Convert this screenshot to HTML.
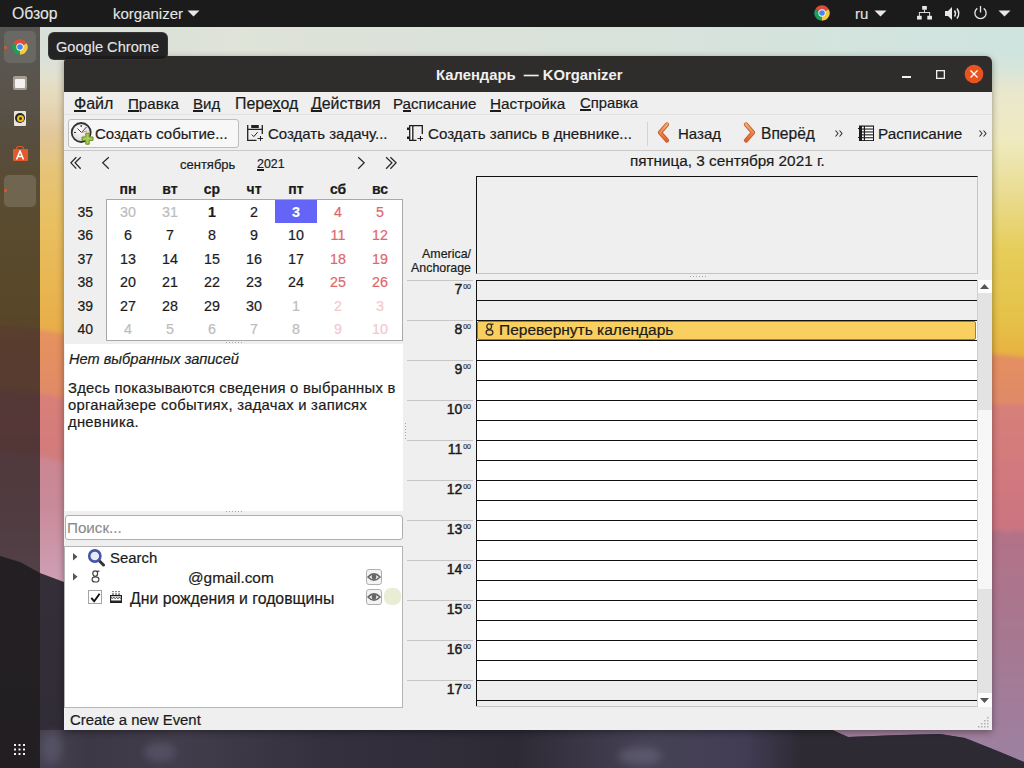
<!DOCTYPE html>
<html><head><meta charset="utf-8">
<style>
*{margin:0;padding:0;box-sizing:border-box}
html,body{width:1024px;height:768px;overflow:hidden}
body{position:relative;font-family:"Liberation Sans",sans-serif;font-size:15px;color:#1b1b1b;background:#c9a0a0;-webkit-text-stroke:0.2px currentColor}
.a{position:absolute;white-space:nowrap;line-height:1}
#wall{position:absolute;left:0;top:0}
#topbar{left:0;top:0;width:1024px;height:27px;background:#1b1b1b;color:#e6e6e6;font-size:15px;-webkit-text-stroke:0.1px #e6e6e6}
#dock{left:0;top:27px;width:40px;height:741px;background:rgba(28,26,26,.7)}
#win{left:64px;top:56px;width:928px;height:674px;background:#efefef;overflow:hidden;border-radius:6px 6px 0 0;box-shadow:0 2px 7px rgba(0,0,0,.38)}
#title{left:0;top:0;width:928px;height:36px;background:#2f2d2c;color:#f0f0f0;font-weight:bold}
.u{position:relative}
.u:after{content:"";position:absolute;left:0;right:0;bottom:0px;height:2px;background:#1b1b1b}
.ul{border-bottom:1px solid #1b1b1b}
.wk{width:30px;text-align:right;font-size:14px;color:#1b1b1b}
.dh{font-weight:bold;font-size:14px;width:42px;text-align:center}
.d{width:42px;text-align:center;font-size:14.3px}
.g{color:#bcbcbc}
.r{color:#e0666a}
.p{color:#f3c9cb}
.hl{left:343px;width:66px;height:1px;background:#c8c8c8}
.hr{font-size:14px;text-align:right;width:60px;left:335px;color:#1b1b1b;-webkit-text-stroke:0.45px #1b1b1b}
.hr sup{font-size:7px;vertical-align:0;position:relative;top:-5px;margin-left:1px;-webkit-text-stroke:0.15px #1b1b1b}
.line{left:412px;width:501px;height:1px;background:#111}
</style></head><body>
<svg id="wall" width="1024" height="768" viewBox="0 0 1024 768">
  <defs>
    <linearGradient id="skyL" x1="0" y1="27" x2="0" y2="340" gradientUnits="userSpaceOnUse">
      <stop offset="0" stop-color="#e4e7dc"/>
      <stop offset="0.10" stop-color="#e7e6d4"/>
      <stop offset="0.24" stop-color="#e6d8b8"/>
      <stop offset="0.34" stop-color="#e2c89c"/>
      <stop offset="0.46" stop-color="#e6c478"/>
      <stop offset="0.62" stop-color="#e8c062"/>
      <stop offset="0.82" stop-color="#e8b652"/>
      <stop offset="1" stop-color="#e8ac48"/>
    </linearGradient>
    <linearGradient id="skyR" x1="0" y1="27" x2="0" y2="360" gradientUnits="userSpaceOnUse">
      <stop offset="0" stop-color="#d4e6df"/>
      <stop offset="0.10" stop-color="#dfe6d6"/>
      <stop offset="0.22" stop-color="#ebe7cb"/>
      <stop offset="0.34" stop-color="#efeabf"/>
      <stop offset="0.52" stop-color="#e9da8c"/>
      <stop offset="0.67" stop-color="#e6cd5a"/>
      <stop offset="0.88" stop-color="#e5c148"/>
      <stop offset="1" stop-color="#e8b042"/>
    </linearGradient>
    <linearGradient id="topS" x1="40" y1="0" x2="1024" y2="0" gradientUnits="userSpaceOnUse">
      <stop offset="0" stop-color="#d8dfd9"/>
      <stop offset="0.2" stop-color="#dfe3d8"/>
      <stop offset="0.5" stop-color="#dae2da"/>
      <stop offset="1" stop-color="#cfe4df"/>
    </linearGradient>
    <linearGradient id="r1" x1="0" y1="330" x2="0" y2="404" gradientUnits="userSpaceOnUse">
      <stop offset="0" stop-color="#e6925e"/>
      <stop offset="1" stop-color="#e08a68"/>
    </linearGradient>
    <linearGradient id="r2" x1="0" y1="395" x2="0" y2="532" gradientUnits="userSpaceOnUse">
      <stop offset="0" stop-color="#d88078"/>
      <stop offset="1" stop-color="#cb7482"/>
    </linearGradient>
    <linearGradient id="r3" x1="0" y1="460" x2="0" y2="768" gradientUnits="userSpaceOnUse">
      <stop offset="0" stop-color="#c27a8c"/>
      <stop offset="0.25" stop-color="#b27288"/>
      <stop offset="0.6" stop-color="#a67892"/>
      <stop offset="1" stop-color="#9c82a2"/>
    </linearGradient>
    <linearGradient id="r3L" x1="0" y1="455" x2="0" y2="580" gradientUnits="userSpaceOnUse">
      <stop offset="0" stop-color="#cc8690"/>
      <stop offset="0.4" stop-color="#c88a9a"/>
      <stop offset="1" stop-color="#cf9fb4"/>
    </linearGradient>
    <linearGradient id="mtn" x1="0" y1="550" x2="0" y2="768" gradientUnits="userSpaceOnUse">
      <stop offset="0" stop-color="#352f3a"/>
      <stop offset="1" stop-color="#2f2b36"/>
    </linearGradient>
    <linearGradient id="mtnH" x1="40" y1="0" x2="992" y2="0" gradientUnits="userSpaceOnUse">
      <stop offset="0" stop-color="#4a4656"/>
      <stop offset="0.05" stop-color="#3e3a48"/>
      <stop offset="0.15" stop-color="#45404f"/>
      <stop offset="0.30" stop-color="#353140"/>
      <stop offset="0.50" stop-color="#2d2934"/>
      <stop offset="0.56" stop-color="#3a3646"/>
      <stop offset="0.64" stop-color="#4a465a"/>
      <stop offset="0.74" stop-color="#45405a"/>
      <stop offset="0.80" stop-color="#2e2a33"/>
      <stop offset="1" stop-color="#2e2a33"/>
    </linearGradient>
    <clipPath id="mclip"><path d="M0 556 L20 562 L40 573 L64 582 L200 640 L400 700 L600 718 L760 724 L830 729 L848 737 L900 735 L940 734 L965 738 L1000 752 L1024 762 L1024 768 L0 768Z"/></clipPath>
    <linearGradient id="topMG" x1="0" y1="27" x2="0" y2="87" gradientUnits="userSpaceOnUse"><stop offset="0" stop-color="#fff"/><stop offset="0.45" stop-color="#fff"/><stop offset="1" stop-color="#000"/></linearGradient>
    <mask id="topM" maskUnits="userSpaceOnUse" x="0" y="0" width="1024" height="768"><rect x="0" y="27" width="1024" height="60" fill="url(#topMG)"/></mask>
    <filter id="soft" x="-10%" y="-10%" width="120%" height="120%"><feGaussianBlur stdDeviation="2"/></filter>
    <filter id="bl2" x="-50%" y="-50%" width="200%" height="200%"><feGaussianBlur stdDeviation="4"/></filter>
  </defs>
  <rect x="0" y="0" width="512" height="768" fill="url(#skyL)"/>
  <rect x="512" y="0" width="512" height="768" fill="url(#skyR)"/>
  <rect x="40" y="27" width="984" height="60" fill="url(#topS)" mask="url(#topM)"/>
  <g filter="url(#soft)"><path d="M-30 324 L30 328 L64 334 L300 340 L700 348 L992 354 L1054 360 L1054 800 L-30 800Z" fill="url(#r1)"/>
  <path d="M-30 388 L40 393 L64 398 L400 400 L800 402 L992 404 L1054 406 L1054 800 L-30 800Z" fill="url(#r2)"/>
  <path d="M-30 447 L40 456 L64 462 L400 490 L512 498 L512 800 L-30 800Z" fill="url(#r3L)"/>
  <path d="M511 498 L800 520 L992 532 L1000 529 L1006 533 L1012 530 L1054 536 L1054 800 L511 800Z" fill="url(#r3)"/></g>
  <path d="M0 556 L20 562 L40 573 L64 582 L200 640 L400 700 L600 718 L760 724 L830 729 L848 737 L900 735 L940 734 L965 738 L1000 752 L1024 762 L1024 768 L0 768Z" fill="url(#mtn)"/>
  <rect x="40" y="730" width="984" height="38" fill="url(#mtnH)" opacity=".85" clip-path="url(#mclip)"/>
  <g filter="url(#bl2)" opacity=".45">
  <ellipse cx="52" cy="748" rx="10" ry="16" fill="#6a6880"/>
  <ellipse cx="160" cy="752" rx="16" ry="10" fill="#6a6680"/>
  <ellipse cx="640" cy="756" rx="22" ry="9" fill="#76728a"/>
  </g>
</svg>

<div id="topbar" class="a">
  <div class="a" style="left:12px;top:6px;font-size:15.8px">Обзор</div>
  <div class="a" style="left:113px;top:6px">korganizer</div>
  <svg class="a" style="left:187px;top:10px" width="13" height="7"><path d="M0.5 0.5 L12.5 0.5 L6.5 6.5Z" fill="#e8e8e8"/></svg>
  <svg class="a" style="left:814px;top:5px" width="16" height="16" viewBox="0 0 16 16">
    <path d="M8 8 L1.33 4.15 A7.7 7.7 0 0 1 14.67 4.15 Z" fill="#dd4b3a"/>
    <path d="M8 8 L14.67 4.15 A7.7 7.7 0 0 1 8 15.7 Z" fill="#f5c93e"/>
    <path d="M8 8 L8 15.7 A7.7 7.7 0 0 1 1.33 4.15 Z" fill="#1ba05a"/>
    <circle cx="8" cy="8" r="3.7" fill="#f4f4f4"/><circle cx="8" cy="8" r="2.8" fill="#4486f0"/>
  </svg>
  <div class="a" style="left:855px;top:6px">ru</div>
  <svg class="a" style="left:874px;top:10px" width="13" height="7"><path d="M0.5 0.5 L12.5 0.5 L6.5 6.5Z" fill="#e8e8e8"/></svg>
  <svg class="a" style="left:917px;top:6px" width="15" height="14" viewBox="0 0 16 15" fill="#e8e8e8">
    <rect x="5.5" y="0" width="5" height="4"/><rect x="7.5" y="4" width="1" height="3"/><rect x="2" y="6.5" width="12" height="1"/>
    <rect x="2" y="7" width="1" height="4"/><rect x="13" y="7" width="1" height="4"/>
    <rect x="0" y="10.5" width="5" height="4"/><rect x="11" y="10.5" width="5" height="4"/>
  </svg>
  <svg class="a" style="left:945px;top:6px" width="17" height="15" viewBox="0 0 17 15">
    <path d="M0 5 L3 5 L7 1 L7 14 L3 10 L0 10Z" fill="#e8e8e8"/>
    <path d="M9.5 4.5 Q11.5 7.5 9.5 10.5" stroke="#e8e8e8" stroke-width="1.5" fill="none"/>
    <path d="M12 2.5 Q15.5 7.5 12 12.5" stroke="#e8e8e8" stroke-width="1.5" fill="none"/>
  </svg>
  <svg class="a" style="left:973px;top:4.5px" width="15" height="15" viewBox="0 0 16 16">
    <path d="M4.6 3.6 A6 6 0 1 0 11.4 3.6" stroke="#e8e8e8" stroke-width="1.4" fill="none"/>
    <path d="M8 1 L8 8" stroke="#e8e8e8" stroke-width="1.4"/>
  </svg>
  <svg class="a" style="left:998px;top:10px" width="13" height="7"><path d="M0.5 0.5 L12.5 0.5 L6.5 6.5Z" fill="#e8e8e8"/></svg>
</div>

<div id="dock" class="a">
  <div class="a" style="left:4px;top:4px;width:32px;height:32px;border-radius:5px;background:rgba(255,255,255,.1)"></div>
  <div class="a" style="left:4px;top:148px;width:32px;height:32px;border-radius:5px;background:rgba(255,255,255,.14)"></div>
  <div class="a" style="left:4px;top:19px;width:3px;height:3px;border-radius:2px;background:#e9541f"></div>
  <div class="a" style="left:4px;top:162px;width:3px;height:3px;border-radius:2px;background:#e9541f"></div>
  <svg class="a" style="left:12px;top:12px" width="16" height="16" viewBox="0 0 16 16">
    <path d="M8 8 L1.33 4.15 A7.7 7.7 0 0 1 14.67 4.15 Z" fill="#dd4b3a"/>
    <path d="M8 8 L14.67 4.15 A7.7 7.7 0 0 1 8 15.7 Z" fill="#f5c93e"/>
    <path d="M8 8 L8 15.7 A7.7 7.7 0 0 1 1.33 4.15 Z" fill="#1ba05a"/>
    <circle cx="8" cy="8" r="3.7" fill="#f4f4f4"/><circle cx="8" cy="8" r="2.8" fill="#4486f0"/>
  </svg>
  <div class="a" style="left:13px;top:49px;width:14px;height:14px;border-radius:2px;background:#a59e92"></div>
  <div class="a" style="left:15px;top:52px;width:10px;height:9px;border-radius:1px;background:#f4f2ee"></div>
  <div class="a" style="left:14px;top:84px;width:12px;height:15px;border-radius:1px;background:#e9e5dc"></div>
  <div class="a" style="left:15px;top:86px;width:10px;height:10px;border-radius:5px;background:#222"></div>
  <div class="a" style="left:16.5px;top:87.5px;width:7px;height:7px;border-radius:4px;background:#e8c020"></div>
  <div class="a" style="left:18.5px;top:89.5px;width:3px;height:3px;border-radius:2px;background:#333"></div>
  <div class="a" style="left:12.5px;top:122px;width:15px;height:12px;border-radius:1px;background:#e4582b"></div>
  <div class="a" style="left:16px;top:119px;width:8px;height:4px;border:1.3px solid #e4582b;border-bottom:none;border-radius:3px 3px 0 0"></div>
  <svg class="a" style="left:14px;top:123px" width="12" height="10" viewBox="0 0 12 10"><path d="M2.5 9.5 L6 1 L9.5 9.5 M3.8 6.5 H8.2" stroke="#fff" stroke-width="1.5" fill="none"/></svg>
  <svg class="a" style="left:14px;top:717px" width="11" height="11" viewBox="0 0 11 11" fill="#f2f2f2">
    <rect x="0" y="0" width="2" height="2"/><rect x="4.5" y="0" width="2" height="2"/><rect x="9" y="0" width="2" height="2"/>
    <rect x="0" y="4.5" width="2" height="2"/><rect x="4.5" y="4.5" width="2" height="2"/><rect x="9" y="4.5" width="2" height="2"/>
    <rect x="0" y="9" width="2" height="2"/><rect x="4.5" y="9" width="2" height="2"/><rect x="9" y="9" width="2" height="2"/>
  </svg>
</div>

<div id="win" class="a">
  <div id="title" class="a">
    <div class="a" style="left:372px;top:12px;font-size:14.8px;-webkit-text-stroke:0">Календарь&nbsp; — KOrganizer</div>
    <div class="a" style="left:838px;top:20px;width:9px;height:1.6px;background:#f0f0f0"></div>
    <svg class="a" style="left:872px;top:13.5px" width="9" height="9"><rect x="0.65" y="0.65" width="7.7" height="7.7" fill="none" stroke="#f0f0f0" stroke-width="1.3"/></svg>
    <svg class="a" style="left:900px;top:8px" width="20" height="20" viewBox="0 0 20 20">
      <circle cx="10" cy="10" r="9.3" fill="#e8531f"/>
      <path d="M6.5 6.5 L13.5 13.5 M13.5 6.5 L6.5 13.5" stroke="#fff" stroke-width="1.3"/>
    </svg>
  </div>
  <!-- menubar -->
  <div class="a" style="left:0;top:58px;width:928px;height:1px;background:#e1e1e1"></div>
  <div class="a" style="left:10px;top:40px;font-size:16.0px"><span class="u">Ф</span>айл</div>
  <div class="a" style="left:64px;top:40px;font-size:15.1px"><span class="u">П</span>равка</div>
  <div class="a" style="left:129px;top:40px;font-size:15.0px"><span class="u">В</span>ид</div>
  <div class="a" style="left:171px;top:40px;font-size:15.9px">Пере<span class="u">х</span>од</div>
  <div class="a" style="left:247px;top:40px;font-size:15.9px"><span class="u">Д</span>ействия</div>
  <div class="a" style="left:329px;top:40px;font-size:15.15px">Р<span class="u">а</span>списание</div>
  <div class="a" style="left:426px;top:40px;font-size:15.3px"><span class="u">Н</span>астройка</div>
  <div class="a" style="left:516px;top:40px;font-size:14.8px"><span class="u">С</span>правка</div>
  <!-- toolbar -->
  <div class="a" style="left:0;top:94px;width:928px;height:1px;background:#c9c9c9"></div>
  <div class="a" style="left:4px;top:63px;width:171px;height:29px;border:1px solid #bdbdbd;border-radius:3px;background:#f7f7f7"></div>
  <svg class="a" style="left:6px;top:65px" width="25" height="25" viewBox="0 0 25 25">
    <defs><radialGradient id="cf" cx="0.45" cy="0.35" r="0.7"><stop offset="0" stop-color="#fdfdfd"/><stop offset="1" stop-color="#d6d6d6"/></radialGradient></defs>
    <circle cx="11.2" cy="11.5" r="9.5" fill="url(#cf)" stroke="#333" stroke-width="1.8"/>
    <path d="M11.2 4 L11.2 6" stroke="#333" stroke-width="1.2"/>
    <path d="M4 11.5 L6 11.5" stroke="#333" stroke-width="1.2"/>
    <path d="M7.5 7.5 L11.5 11.5 L16.5 6" stroke="#444" stroke-width="1" fill="none"/>
    <path d="M11.5 11.5 L17 10" stroke="#e08080" stroke-width="1"/>
    <path d="M15.8 12.2 h3.4 v3.8 h3.8 v3.4 h-3.8 v3.8 h-3.4 v-3.8 h-3.8 v-3.4 h3.8z" fill="#a9ca55" stroke="#6a8c28" stroke-width="1" stroke-linejoin="round"/>
  </svg>
  <div class="a" style="left:31px;top:70px">Создать событие...</div>
  <svg class="a" style="left:183px;top:69px" width="16" height="16" viewBox="0 0 16 16" fill="none" stroke="#222" stroke-width="1.3">
    <path d="M0.7 0 V15.3 H9.5"/><path d="M15.3 0 V9"/><path d="M0.7 4.4 H15.3"/>
    <rect x="4.2" y="0" width="7.6" height="3" fill="#222" stroke="none"/>
    <path d="M4.8 9.6 L6.8 11.6 L10.6 7.2" stroke-width="1"/>
    <path d="M10.5 13.5 H16 M13.5 11 V16" stroke-width="1"/>
  </svg>
  <div class="a" style="left:204px;top:70px">Создать задачу...</div>
  <svg class="a" style="left:343px;top:69px" width="16" height="16" viewBox="0 0 16 16" fill="none" stroke="#1b1b1b" stroke-width="1.3">
    <rect x="3.3" y="1.3" width="2" height="13.4" fill="#fafafa" stroke="none"/>
    <path d="M9.5 15.3 H2.7 V0.7 H15.3 V9"/><path d="M5.8 1 V15"/>
    <rect x="0" y="2.5" width="2" height="2.5" fill="#1b1b1b" stroke="none"/>
    <rect x="0" y="11.5" width="2" height="2.5" fill="#1b1b1b" stroke="none"/>
    <path d="M10.5 13.5 H16 M13.5 11 V16" stroke-width="1"/>
  </svg>
  <div class="a" style="left:364px;top:70px;font-size:15.15px">Создать запись в дневнике...</div>
  <div class="a" style="left:583px;top:66px;width:1px;height:24px;background:#d4d4d4"></div>
  <svg class="a" style="left:593px;top:66px" width="13" height="21" viewBox="0 0 13 21">
    <defs><linearGradient id="og" x1="0" y1="0" x2="0" y2="1"><stop offset="0" stop-color="#f3ad72"/><stop offset="1" stop-color="#e45f2c"/></linearGradient></defs>
    <path d="M10 2.5 L3 10.5 L10 18.5" fill="none" stroke="#c9602e" stroke-width="4.2" stroke-linecap="round" stroke-linejoin="round"/>
    <path d="M10 2.5 L3 10.5 L10 18.5" fill="none" stroke="url(#og)" stroke-width="2.6" stroke-linecap="round" stroke-linejoin="round"/>
  </svg>
  <div class="a" style="left:614px;top:70px">Назад</div>
  <svg class="a" style="left:679px;top:66px" width="13" height="21" viewBox="0 0 13 21">
    <path d="M3 2.5 L10 10.5 L3 18.5" fill="none" stroke="#c9602e" stroke-width="4.2" stroke-linecap="round" stroke-linejoin="round"/>
    <path d="M3 2.5 L10 10.5 L3 18.5" fill="none" stroke="url(#og)" stroke-width="2.6" stroke-linecap="round" stroke-linejoin="round"/>
  </svg>
  <div class="a" style="left:697px;top:70px;font-size:15.6px">Вперёд</div>
  <svg class="a" style="left:771px;top:74px" width="9" height="7" viewBox="0 0 9 7" fill="none" stroke="#333" stroke-width="1.1"><path d="M0.5 0.5 L3 3.5 L0.5 6.5 M4.5 0.5 L7 3.5 L4.5 6.5"/></svg>
  <svg class="a" style="left:794px;top:69px" width="16" height="16" viewBox="0 0 16 16">
    <rect x="1" y="0.5" width="15" height="15.5" fill="#1b1b1b"/>
    <rect x="4" y="1.7" width="1.8" height="1.8" fill="#fff"/><rect x="7" y="1.7" width="8" height="1.8" fill="#fff"/>
    <rect x="4" y="4.6" width="1.8" height="1.8" fill="#fff"/><rect x="7" y="4.6" width="8" height="1.8" fill="#fff"/>
    <rect x="4" y="7.5" width="1.8" height="1.8" fill="#fff"/><rect x="7" y="7.5" width="8" height="1.8" fill="#fff"/>
    <rect x="4" y="10.4" width="1.8" height="1.8" fill="#fff"/><rect x="7" y="10.4" width="8" height="1.8" fill="#fff"/>
    <rect x="4" y="13.3" width="1.8" height="1.8" fill="#fff"/><rect x="7" y="13.3" width="8" height="1.8" fill="#fff"/>
    <rect x="0" y="3" width="1.5" height="1" fill="#1b1b1b"/><rect x="0" y="12" width="1.5" height="1" fill="#1b1b1b"/>
  </svg>
  <div class="a" style="left:814px;top:70px;font-size:15.3px">Расписание</div>
  <svg class="a" style="left:915px;top:74px" width="9" height="7" viewBox="0 0 9 7" fill="none" stroke="#333" stroke-width="1.1"><path d="M0.5 0.5 L3 3.5 L0.5 6.5 M4.5 0.5 L7 3.5 L4.5 6.5"/></svg>
  <!-- left panel -->
<svg class="a" style="left:5px;top:100px" width="14" height="14" viewBox="0 0 14 14" fill="none" stroke="#2a2a2a" stroke-width="1.25"><path d="M7.3 1.3 L1.9 6.8 L7.3 12.7 M11.7 1.3 L6.1 6.8 L11.7 12.7"/></svg>
<svg class="a" style="left:37px;top:100px" width="9" height="14" viewBox="0 0 9 14" fill="none" stroke="#2a2a2a" stroke-width="1.25"><path d="M7.8 1.3 L1.7 6.8 L7.8 12.7"/></svg>
<svg class="a" style="left:292px;top:100px" width="10" height="14" viewBox="0 0 10 14" fill="none" stroke="#2a2a2a" stroke-width="1.25"><path d="M2.2 1.3 L8.2 6.8 L2.2 12.7"/></svg>
<svg class="a" style="left:320px;top:100px" width="14" height="14" viewBox="0 0 14 14" fill="none" stroke="#2a2a2a" stroke-width="1.25"><path d="M2.1 1.3 L7.9 6.8 L2.1 12.7 M6.4 1.3 L12.1 6.8 L6.4 12.7"/></svg>
<div class="a" style="left:116px;top:102px;font-size:13px">сентябрь</div>
<div class="a" style="left:193px;top:102px;font-size:12.4px"><span class="u">2</span>021</div>
<div class="a dh" style="left:43px;top:126px">пн</div>
<div class="a dh" style="left:85px;top:126px">вт</div>
<div class="a dh" style="left:127px;top:126px">ср</div>
<div class="a dh" style="left:169px;top:126px">чт</div>
<div class="a dh" style="left:211px;top:126px">пт</div>
<div class="a dh" style="left:253px;top:126px">сб</div>
<div class="a dh" style="left:295px;top:126px">вс</div>
<div class="a" style="left:42px;top:143px;width:297px;height:142px;border:1px solid #a9a9a9;background:#fff"></div>
<div class="a" style="left:211px;top:144px;width:42px;height:23px;background:#6464f6"></div>
<div class="a wk" style="left:-1px;top:149.0px">35</div>
<div class="a d g" style="left:43px;top:149.0px;">30</div>
<div class="a d g" style="left:85px;top:149.0px;">31</div>
<div class="a d" style="left:127px;top:149.0px;font-weight:bold;">1</div>
<div class="a d" style="left:169px;top:149.0px;">2</div>
<div class="a d" style="left:211px;top:149.0px;font-weight:bold;color:#fff;">3</div>
<div class="a d r" style="left:253px;top:149.0px;">4</div>
<div class="a d r" style="left:295px;top:149.0px;">5</div>
<div class="a wk" style="left:-1px;top:172.4px">36</div>
<div class="a d" style="left:43px;top:172.4px;">6</div>
<div class="a d" style="left:85px;top:172.4px;">7</div>
<div class="a d" style="left:127px;top:172.4px;">8</div>
<div class="a d" style="left:169px;top:172.4px;">9</div>
<div class="a d" style="left:211px;top:172.4px;">10</div>
<div class="a d r" style="left:253px;top:172.4px;">11</div>
<div class="a d r" style="left:295px;top:172.4px;">12</div>
<div class="a wk" style="left:-1px;top:195.8px">37</div>
<div class="a d" style="left:43px;top:195.8px;">13</div>
<div class="a d" style="left:85px;top:195.8px;">14</div>
<div class="a d" style="left:127px;top:195.8px;">15</div>
<div class="a d" style="left:169px;top:195.8px;">16</div>
<div class="a d" style="left:211px;top:195.8px;">17</div>
<div class="a d r" style="left:253px;top:195.8px;">18</div>
<div class="a d r" style="left:295px;top:195.8px;">19</div>
<div class="a wk" style="left:-1px;top:219.2px">38</div>
<div class="a d" style="left:43px;top:219.2px;">20</div>
<div class="a d" style="left:85px;top:219.2px;">21</div>
<div class="a d" style="left:127px;top:219.2px;">22</div>
<div class="a d" style="left:169px;top:219.2px;">23</div>
<div class="a d" style="left:211px;top:219.2px;">24</div>
<div class="a d r" style="left:253px;top:219.2px;">25</div>
<div class="a d r" style="left:295px;top:219.2px;">26</div>
<div class="a wk" style="left:-1px;top:242.6px">39</div>
<div class="a d" style="left:43px;top:242.6px;">27</div>
<div class="a d" style="left:85px;top:242.6px;">28</div>
<div class="a d" style="left:127px;top:242.6px;">29</div>
<div class="a d" style="left:169px;top:242.6px;">30</div>
<div class="a d g" style="left:211px;top:242.6px;">1</div>
<div class="a d p" style="left:253px;top:242.6px;">2</div>
<div class="a d p" style="left:295px;top:242.6px;">3</div>
<div class="a wk" style="left:-1px;top:266.0px">40</div>
<div class="a d g" style="left:43px;top:266.0px;">4</div>
<div class="a d g" style="left:85px;top:266.0px;">5</div>
<div class="a d g" style="left:127px;top:266.0px;">6</div>
<div class="a d g" style="left:169px;top:266.0px;">7</div>
<div class="a d g" style="left:211px;top:266.0px;">8</div>
<div class="a d p" style="left:253px;top:266.0px;">9</div>
<div class="a d p" style="left:295px;top:266.0px;">10</div>
<div class="a" style="left:1px;top:288px;width:338px;height:167px;background:#fff"></div>
<div class="a" style="left:5px;top:295.5px;font-size:14.6px;font-style:italic">Нет выбранных записей</div>
<div class="a" style="left:4px;top:324px;font-size:14.8px;letter-spacing:0.26px;line-height:17px">Здесь показываются сведения о выбранных в<br>органайзере событиях, задачах и записях<br>дневника.</div>
<div class="a" style="left:1px;top:459px;width:338px;height:25px;border:1px solid #aeaeae;border-radius:3px;background:#fff"></div>
<div class="a" style="left:3px;top:463.5px;font-size:15.2px;color:#8a8a8a;-webkit-text-stroke:0.1px #8a8a8a">Поиск...</div>
<div class="a" style="left:0;top:490px;width:339px;height:162px;border:1px solid #b4b4b4;background:#fff"></div>
  <!-- /left -->
  <!-- right -->
<svg class="a" style="left:9px;top:497px" width="5" height="8"><path d="M0 0 L4.5 3.8 L0 7.6Z" fill="#555"/></svg>
<svg class="a" style="left:9px;top:517px" width="5" height="8"><path d="M0 0 L4.5 3.8 L0 7.6Z" fill="#555"/></svg>
<svg class="a" style="left:23px;top:492px" width="18" height="19" viewBox="0 0 18 19"><path d="M12 12.5 L16.5 17" stroke="#333" stroke-width="3" stroke-linecap="round"/><circle cx="7.8" cy="8" r="5.6" fill="#e8ecf8" stroke="#4456a6" stroke-width="2.6"/></svg>
<div class="a" style="left:46px;top:495px;font-size:14.9px">Search</div>
<svg class="a" style="left:27px;top:514px" width="9" height="13" viewBox="0 0 9 13" fill="none" stroke="#444" stroke-width="1.2"><ellipse cx="4.2" cy="3.6" rx="2.4" ry="2.7"/><ellipse cx="4.5" cy="9.4" rx="3.4" ry="2.6"/><path d="M5.8 1.4 L8.5 1.2"/></svg>
<div class="a" style="left:124px;top:514px;font-size:15.4px">@gmail.com</div>
<div class="a" style="left:24px;top:534px;width:14px;height:14px;border:1px solid #a4a4a4;background:#fff"></div>
<svg class="a" style="left:26px;top:537px" width="11" height="10" viewBox="0 0 11 10"><path d="M1.3 4.8 L4.2 8.3 L9.6 0.8" fill="none" stroke="#111" stroke-width="1.9"/></svg>
<svg class="a" style="left:46px;top:535px" width="12" height="12" viewBox="0 0 12 12" fill="none" stroke="#1b1b1b" stroke-width="1.1"><path d="M0.6 4.6 H11.4 V11.4 H0.6 Z"/><path d="M0.6 10.2 H11.4" stroke-width="1.4"/><path d="M0.8 6.3 Q2.3 8.3 3.8 6.5 Q5.3 8.5 6.6 6.5 Q8 8.5 9.4 6.5 Q10.5 8 11.2 6.5" stroke-width="0.9"/><path d="M3 2.2 V4.4 M6 2.2 V4.4 M9 2.2 V4.4" stroke-width="1"/><path d="M3 0 V1.2 M6 0 V1.2 M9 0 V1.2" stroke-width="1"/></svg>
<div class="a" style="left:66px;top:535px;font-size:15.8px">Дни рождения и годовщины</div>
<div class="a" style="left:302px;top:513px;width:16px;height:16px;border:1px solid #b0b0b0;border-radius:3px;background:#f3f3f3"></div>
<svg class="a" style="left:303px;top:516px" width="14" height="10" viewBox="0 0 14 10"><path d="M1 5 Q7 -1.3 13 5 Q7 11.3 1 5Z" fill="none" stroke="#646464" stroke-width="1.6"/><circle cx="7" cy="5" r="2.4" fill="#646464"/></svg>
<div class="a" style="left:302px;top:533px;width:16px;height:16px;border:1px solid #b0b0b0;border-radius:3px;background:#f3f3f3"></div>
<svg class="a" style="left:303px;top:536px" width="14" height="10" viewBox="0 0 14 10"><path d="M1 5 Q7 -1.3 13 5 Q7 11.3 1 5Z" fill="none" stroke="#646464" stroke-width="1.6"/><circle cx="7" cy="5" r="2.4" fill="#646464"/></svg>
<div class="a" style="left:320px;top:532px;width:17px;height:17px;border-radius:7px;background:#e9edd5"></div>
<div class="a" style="left:6px;top:657px;font-size:14.9px">Create a new Event</div>
<div class="a" style="left:566px;top:97px;font-size:15.3px">пятница, 3 сентября 2021 г.</div>
<div class="a" style="left:412px;top:120px;width:502px;height:98px;border-left:1px solid #111;border-top:1px solid #111;border-right:1px solid #c4c4c4;border-bottom:1px solid #c4c4c4;background:#efefef"></div>
<div class="a" style="left:336px;top:191px;width:71px;text-align:right;font-size:12.4px;line-height:14px">America/<br>Anchorage</div>
<div class="a" style="left:412px;top:224px;width:501px;height:427px;background:#fff;border-left:1px solid #111;overflow:hidden">
<div class="a" style="left:0;top:0;width:501px;height:40px;background:#efefef"></div>
<div class="a" style="left:0;top:400px;width:501px;height:40px;background:#efefef"></div>
<div class="a" style="left:0;top:0px;width:501px;height:1px;background:#111"></div>
<div class="a" style="left:0;top:20px;width:501px;height:1px;background:#111"></div>
<div class="a" style="left:0;top:40px;width:501px;height:1px;background:#111"></div>
<div class="a" style="left:0;top:60px;width:501px;height:1px;background:#111"></div>
<div class="a" style="left:0;top:80px;width:501px;height:1px;background:#111"></div>
<div class="a" style="left:0;top:100px;width:501px;height:1px;background:#111"></div>
<div class="a" style="left:0;top:120px;width:501px;height:1px;background:#111"></div>
<div class="a" style="left:0;top:140px;width:501px;height:1px;background:#111"></div>
<div class="a" style="left:0;top:160px;width:501px;height:1px;background:#111"></div>
<div class="a" style="left:0;top:180px;width:501px;height:1px;background:#111"></div>
<div class="a" style="left:0;top:200px;width:501px;height:1px;background:#111"></div>
<div class="a" style="left:0;top:220px;width:501px;height:1px;background:#111"></div>
<div class="a" style="left:0;top:240px;width:501px;height:1px;background:#111"></div>
<div class="a" style="left:0;top:260px;width:501px;height:1px;background:#111"></div>
<div class="a" style="left:0;top:280px;width:501px;height:1px;background:#111"></div>
<div class="a" style="left:0;top:300px;width:501px;height:1px;background:#111"></div>
<div class="a" style="left:0;top:320px;width:501px;height:1px;background:#111"></div>
<div class="a" style="left:0;top:340px;width:501px;height:1px;background:#111"></div>
<div class="a" style="left:0;top:360px;width:501px;height:1px;background:#111"></div>
<div class="a" style="left:0;top:380px;width:501px;height:1px;background:#111"></div>
<div class="a" style="left:0;top:400px;width:501px;height:1px;background:#111"></div>
<div class="a" style="left:0;top:420px;width:501px;height:1px;background:#111"></div>
<div class="a" style="left:0;top:440px;width:501px;height:1px;background:#111"></div>
</div>
<div class="a" style="left:412px;top:650px;width:501px;height:1px;background:#c4c4c4"></div>
<div class="a" style="left:343px;top:224px;width:66px;height:1px;background:#c6c6c6"></div>
<div class="a hr" style="top:226px;width:72px;left:335px"><span>7</span><sup>00</sup></div>
<div class="a" style="left:343px;top:264px;width:66px;height:1px;background:#c6c6c6"></div>
<div class="a hr" style="top:266px;width:72px;left:335px"><span>8</span><sup>00</sup></div>
<div class="a" style="left:343px;top:304px;width:66px;height:1px;background:#c6c6c6"></div>
<div class="a hr" style="top:306px;width:72px;left:335px"><span>9</span><sup>00</sup></div>
<div class="a" style="left:343px;top:344px;width:66px;height:1px;background:#c6c6c6"></div>
<div class="a hr" style="top:346px;width:72px;left:335px"><span>10</span><sup>00</sup></div>
<div class="a" style="left:343px;top:384px;width:66px;height:1px;background:#c6c6c6"></div>
<div class="a hr" style="top:386px;width:72px;left:335px"><span>11</span><sup>00</sup></div>
<div class="a" style="left:343px;top:424px;width:66px;height:1px;background:#c6c6c6"></div>
<div class="a hr" style="top:426px;width:72px;left:335px"><span>12</span><sup>00</sup></div>
<div class="a" style="left:343px;top:464px;width:66px;height:1px;background:#c6c6c6"></div>
<div class="a hr" style="top:466px;width:72px;left:335px"><span>13</span><sup>00</sup></div>
<div class="a" style="left:343px;top:504px;width:66px;height:1px;background:#c6c6c6"></div>
<div class="a hr" style="top:506px;width:72px;left:335px"><span>14</span><sup>00</sup></div>
<div class="a" style="left:343px;top:544px;width:66px;height:1px;background:#c6c6c6"></div>
<div class="a hr" style="top:546px;width:72px;left:335px"><span>15</span><sup>00</sup></div>
<div class="a" style="left:343px;top:584px;width:66px;height:1px;background:#c6c6c6"></div>
<div class="a hr" style="top:586px;width:72px;left:335px"><span>16</span><sup>00</sup></div>
<div class="a" style="left:343px;top:624px;width:66px;height:1px;background:#c6c6c6"></div>
<div class="a hr" style="top:626px;width:72px;left:335px"><span>17</span><sup>00</sup></div>
<div class="a" style="left:413px;top:265px;width:499px;height:19px;background:#f9cf5f;border:1px solid #5d8aaa;border-radius:2px"></div>
<svg class="a" style="left:421px;top:267px" width="9" height="13" viewBox="0 0 9 13" fill="none" stroke="#3a3020" stroke-width="1.3"><ellipse cx="4.2" cy="3.6" rx="2.4" ry="2.7"/><ellipse cx="4.5" cy="9.4" rx="3.4" ry="2.6"/><path d="M5.8 1.4 L8.5 1.2"/></svg>
<div class="a" style="left:435px;top:266px;font-size:15.5px">Перевернуть календарь</div>
<div class="a" style="left:913px;top:224px;width:15px;height:427px;background:#e3e3e3;border-left:1px solid #cfcfcf"></div>
<div class="a" style="left:914px;top:224px;width:14px;height:13px;background:#fdfdfd"></div>
<svg class="a" style="left:916px;top:228px" width="9" height="5"><path d="M0 5 L4.5 0 L9 5Z" fill="#555"/></svg>
<div class="a" style="left:914px;top:354px;width:14px;height:179px;background:#f7f7f7"></div>
<div class="a" style="left:914px;top:637px;width:14px;height:14px;background:#fdfdfd"></div>
<svg class="a" style="left:916px;top:642px" width="9" height="5"><path d="M0 0 L4.5 5 L9 0Z" fill="#555"/></svg>

  <svg class="a" style="left:162px;top:286px" width="20" height="2"><g fill="#a8a8a8"><rect x="0" y="0" width="1" height="1"/><rect x="3" y="0" width="1" height="1"/><rect x="6" y="0" width="1" height="1"/><rect x="9" y="0" width="1" height="1"/><rect x="12" y="0" width="1" height="1"/><rect x="15" y="0" width="1" height="1"/></g></svg>
  <svg class="a" style="left:162px;top:455px" width="20" height="2"><g fill="#a8a8a8"><rect x="0" y="0" width="1" height="1"/><rect x="3" y="0" width="1" height="1"/><rect x="6" y="0" width="1" height="1"/><rect x="9" y="0" width="1" height="1"/><rect x="12" y="0" width="1" height="1"/><rect x="15" y="0" width="1" height="1"/></g></svg>
  <svg class="a" style="left:626px;top:220px" width="20" height="2"><g fill="#a8a8a8"><rect x="0" y="0" width="1" height="1"/><rect x="3" y="0" width="1" height="1"/><rect x="6" y="0" width="1" height="1"/><rect x="9" y="0" width="1" height="1"/><rect x="12" y="0" width="1" height="1"/><rect x="15" y="0" width="1" height="1"/></g></svg>
  <svg class="a" style="left:341px;top:367px" width="2" height="20"><g fill="#a8a8a8"><rect x="0" y="0" width="1" height="1"/><rect x="0" y="3" width="1" height="1"/><rect x="0" y="6" width="1" height="1"/><rect x="0" y="9" width="1" height="1"/><rect x="0" y="12" width="1" height="1"/><rect x="0" y="15" width="1" height="1"/></g></svg>
  <svg class="a" style="left:914px;top:660px" width="12" height="12"><g fill="#b0b0b0"><rect x="9" y="1" width="1.5" height="1.5"/><rect x="6" y="4" width="1.5" height="1.5"/><rect x="9" y="4" width="1.5" height="1.5"/><rect x="3" y="7" width="1.5" height="1.5"/><rect x="6" y="7" width="1.5" height="1.5"/><rect x="9" y="7" width="1.5" height="1.5"/><rect x="0" y="10" width="1.5" height="1.5"/><rect x="3" y="10" width="1.5" height="1.5"/><rect x="6" y="10" width="1.5" height="1.5"/><rect x="9" y="10" width="1.5" height="1.5"/></g></svg>
  <!-- /right -->
</div>
<div class="a" style="left:48px;top:32px;width:120px;height:28px;border-radius:6px;background:rgba(28,28,28,.96);border:1px solid rgba(70,70,70,.5)"></div>
<div class="a" style="left:56px;top:40px;font-size:14.6px;color:#e6e6e6;-webkit-text-stroke:0.1px #e6e6e6">Google Chrome</div>
</body></html>
